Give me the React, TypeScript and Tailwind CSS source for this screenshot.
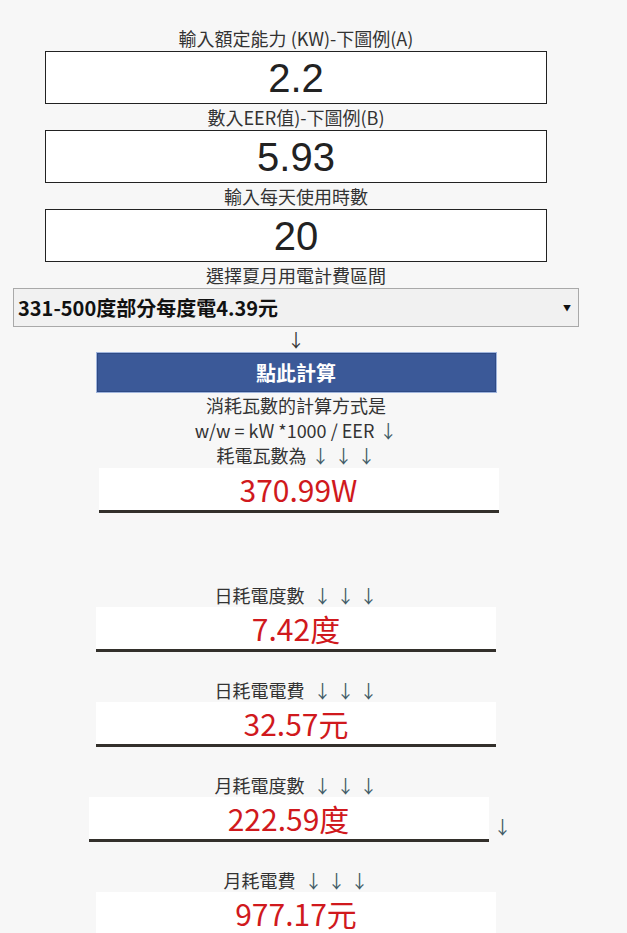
import React from "react";

const cjk = "font-['Noto_Sans_CJK_TC','Liberation_Sans',sans-serif]";

function Arrows({ n = 3 }: { n?: number }) {
  return (
    <span className="text-[#3f5b66]">
      {Array.from({ length: n }).map((_, i) => (
        <span key={i} className="ml-[5px]">
          ↓
        </span>
      ))}
    </span>
  );
}

function Field({ label, value }: { label: string; value: string }) {
  return (
    <>
      <div className="h-[26px] text-[18px] leading-[26px] text-[#333]">{label}</div>
      <input
        readOnly
        value={value}
        className="h-[53px] w-[502px] border border-[#222] bg-white text-center font-['Liberation_Sans',sans-serif] text-[40px] text-[#222] outline-none"
      />
    </>
  );
}

function Result({
  label,
  value,
  tail,
  first,
}: {
  label: string;
  value: string;
  tail?: boolean;
  first?: boolean;
}) {
  return (
    <div className={`flex flex-col items-center ${first ? "mt-[70px]" : "mt-[26px]"}`}>
      <div className="h-[24px] text-[18px] leading-[24px] text-[#333]">
        {label}
        <Arrows />
      </div>
      <div className={`flex items-center ${tail ? "ml-[6px]" : ""}`}>
        <div className="h-[45px] w-[400px] border-b-[3px] border-[#33302b] bg-white text-center text-[30px] leading-[42px] text-[#d0191d]">
          {value}
        </div>
        {tail && <span className="ml-[5px] mt-[14px] w-[16px] text-[18px] text-[#3f5b66]">↓</span>}
      </div>
    </div>
  );
}

export default function App() {
  return (
    <div className={`min-h-[933px] bg-[#f7f7f7] ${cjk}`}>
      <div className="flex w-[592px] flex-col items-center pt-[25px]">
        <Field label="輸入額定能力 (KW)-下圖例(A)" value="2.2" />
        <Field label="數入EER值)-下圖例(B)" value="5.93" />
        <Field label="輸入每天使用時數" value="20" />

        <div className="h-[26px] text-[18px] leading-[26px] text-[#333]">選擇夏月用電計費區間</div>
        <div className="flex h-[39px] w-[566px] items-center justify-between border border-[#a9a9a9] bg-[#f1f1f1] pl-[4px] pr-[7px]">
          <span className="text-[20px] font-bold text-[#111]">331-500度部分每度電4.39元</span>
          <span className="text-[8px] text-[#111]">▼</span>
        </div>

        <div className="h-[25px] text-[18px] leading-[25px] text-[#333]">↓</div>

        <button className="h-[41px] w-[401px] border border-[#9fb4dc] bg-[#3b5998] shadow-[inset_0_0_0_1px_#2e4a85] text-[20px] font-bold text-white">
          點此計算
        </button>

        <div className="text-center text-[18px] leading-[25px] text-[#333]">
          <div>消耗瓦數的計算方式是</div>
          <div>
            w/w = kW *1000 / EER<Arrows n={1} />
          </div>
          <div>
            耗電瓦數為
            <Arrows />
          </div>
        </div>
        <div className="ml-[5px] h-[45px] w-[400px] border-b-[3px] border-[#33302b] bg-white text-center text-[30px] leading-[42px] text-[#d0191d]">
          370.99W
        </div>

        <Result first label="日耗電度數 " value="7.42度" />
        <Result label="日耗電電費 " value="32.57元" />
        <Result label="月耗電度數 " value="222.59度" tail />
        <Result label="月耗電費 " value="977.17元" />
      </div>
    </div>
  );
}
